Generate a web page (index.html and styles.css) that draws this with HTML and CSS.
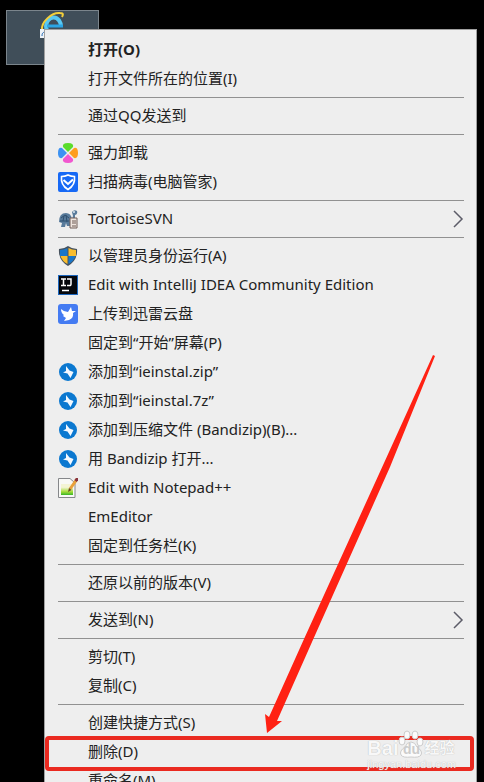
FILE: index.html
```html
<!DOCTYPE html>
<html lang="zh-CN">
  <head>
    <meta charset="UTF-8" />
    <meta name="viewport" content="width=device-width, initial-scale=1.0" />
    <title>ieinstal</title>
    <link rel="stylesheet" href="styles.css">
  </head>
  <body>
    <svg class="defs" aria-hidden="true">
      <symbol id="bandizip" viewBox="0 0 20 20">
        <circle cx="10" cy="10" r="9" fill="#0b78d0" />
        <path d="M8 4 L11.500 8.500 L15.500 10 L12.500 16 L9.500 11.500 L5 10.500 L8 9 Z" fill="#f4f9ff" />
      </symbol>
      <symbol id="chevron" viewBox="0 0 12 18">
        <path d="M2 1 L10 9 L2 17" fill="none" stroke="#5c5c68" stroke-width="1.500" />
      </symbol>
    </svg>
    <main class="desktop">
      <div class="shortcut">
        <svg class="shortcut-icon" viewBox="0 0 28 28" aria-hidden="true">
          <path d="M22 16 A7.500 9 0 0 0 7 15 Q7 22 14 23 Q19 23 21 20" fill="none" stroke="#58c8f3" stroke-width="4" />
          <path d="M8 15 H24" fill="none" stroke="#2ba5e4" stroke-width="3" />
          <path d="M3 19 C2 11 13 1 21 2 C25 2 24 4 23 6" fill="none" stroke="#f3cf3b" stroke-width="2" />
          <path d="M1 18 h9 v9 h-9 z" fill="#eef3f8" />
          <path d="M3 25 C3 21 5 21 8 21" fill="none" stroke="#2268b2" stroke-width="1" />
        </svg>
      </div>

      <div class="menu">
        <button class="item default"><span class="icon"></span>打开(O)</button>
        <button class="item"><span class="icon"></span>打开文件所在的位置(I)</button>
        <hr>
        <button class="item"><span class="icon"></span>通过QQ发送到</button>
        <hr>
        <button class="item">
          <svg class="icon" viewBox="0 0 20 20" aria-hidden="true">
            <path d="M10 9 L5 4 Q4 0 10 0 Q16 0 15 4 Z" fill="#5bdc2c" />
            <path d="M11 10 L16 5 Q20 4 20 10 Q20 16 16 15 Z" fill="#ff9d1e" />
            <path d="M10 11 L15 16 Q16 20 10 20 Q4 20 5 16 Z" fill="#f157cf" />
            <path d="M9 10 L4 15 Q0 16 0 10 Q0 4 4 5 Z" fill="#3c92f2" />
          </svg>
          强力卸载
        </button>
        <button class="item">
          <svg class="icon" viewBox="0 0 20 20" aria-hidden="true">
            <rect width="20" height="20" rx="2" fill="#1769f5" />
            <path d="M10 3 Q13 4.500 16.500 4.500 Q17.500 13 10 17.500 Q2.500 13 3.500 4.500 Q7 4.500 10 3 Z" fill="none" stroke="#fff" stroke-width="1.600" />
            <path d="M5.500 8 L10 12 L15 7.500" fill="none" stroke="#fff" stroke-width="2" />
          </svg>
          扫描病毒(电脑管家)
        </button>
        <hr>
        <button class="item">
          <svg class="icon" viewBox="0 0 20 20" aria-hidden="true">
            <path d="M1 13 Q1 4 8 4 Q13 4 14 10 L15 7 L14 3 Q16 0 19 2 Q20 5 17 6 L17 10 L12 17 H9 L8 14 L7 18 H3 L4 14 Z" fill="#587b9b" />
            <path d="M3 9 L7 6 L11 9 M6 7 L5 12 M8 6 L9 13 M2 12 H11" fill="none" stroke="#2f506f" />
            <circle cx="16" cy="3" r="1" fill="#dce8f3" />
            <path d="M12 9 h7 v10 h-7 z" fill="#eee5df" stroke="#705f59" />
            <path d="M14 12 h4 M14 14 h4 M14 17 h4" stroke="#6d5a54" />
          </svg>
          TortoiseSVN
          <svg class="chevron" aria-hidden="true"><use href="#chevron" /></svg>
        </button>
        <hr>
        <button class="item">
          <svg class="icon" viewBox="0 0 20 20" aria-hidden="true">
            <path d="M10 0 Q6 3 1 3 Q0 14 10 20 Q20 14 19 3 Q14 3 10 0 Z" fill="#46525e" />
            <path d="M9.500 2 Q6 4 2 4 V10 H9.500 Z M10.500 10 H17.500 Q16 15 10.500 18 Z" fill="#1976c9" />
            <path d="M10.500 2 Q14 4 18 4 V10 H10.500 Z M9.500 10 H2.500 Q4 15 9.500 18 Z" fill="#f9bd2e" />
          </svg>
          以管理员身份运行(A)
        </button>
        <button class="item">
          <svg class="icon" viewBox="0 0 20 20" aria-hidden="true">
            <rect width="20" height="20" fill="#1c66bd" />
            <rect x="1" y="1" width="18" height="18" fill="#05070c" />
            <path d="M3 4 H8 M5.500 4 V10 M3 10.500 H8 M9 4 H13 V9 Q13 11 11 10.500 H9 M4 15.500 H11" fill="none" stroke="#fff" stroke-width="1.500" />
          </svg>
          Edit with IntelliJ IDEA Community Edition
        </button>
        <button class="item">
          <svg class="icon" viewBox="0 0 20 20" aria-hidden="true">
            <rect width="20" height="20" rx="3" fill="#447bf2" />
            <path d="M3 5 Q6 8 10 8 L13 3 L14 7 L18 7 L15 9 Q16 14 11 16 L6 17 L8 14 L5 12 L6 11 Q3 9 3 5 Z" fill="#fff" />
          </svg>
          上传到迅雷云盘
        </button>
        <button class="item"><span class="icon"></span>固定到“开始”屏幕(P)</button>
        <button class="item"><svg class="icon" aria-hidden="true"><use href="#bandizip" /></svg>添加到“ieinstal.zip”</button>
        <button class="item"><svg class="icon" aria-hidden="true"><use href="#bandizip" /></svg>添加到“ieinstal.7z”</button>
        <button class="item"><svg class="icon" aria-hidden="true"><use href="#bandizip" /></svg>添加到压缩文件 (Bandizip)(B)...</button>
        <button class="item"><svg class="icon" aria-hidden="true"><use href="#bandizip" /></svg>用 Bandizip 打开...</button>
        <button class="item">
          <svg class="icon" viewBox="0 0 20 20" aria-hidden="true">
            <linearGradient id="note" x1="0" y1="0" x2="0" y2="1">
              <stop offset="0.300" stop-color="#f4f4d5" />
              <stop offset="0.700" stop-color="#a4dc38" />
              <stop offset="1" stop-color="#38b526" />
            </linearGradient>
            <path d="M0.500 0.500 H12 L17 5 V19.500 H0.500 Z" fill="#f8f8f6" stroke="#85878a" />
            <path d="M3 6 H15 V17 H3 Z" fill="url(#note)" />
            <path d="M12 11 L19 1" stroke="#e9a13b" stroke-width="3" />
            <path d="M17.500 3 L20 0" stroke="#88333d" stroke-width="3" />
            <path d="M10 14 L11 10 L13.500 12 Z" fill="#6a4824" />
          </svg>
          Edit with Notepad++
        </button>
        <button class="item"><span class="icon"></span>EmEditor</button>
        <button class="item"><span class="icon"></span>固定到任务栏(K)</button>
        <hr>
        <button class="item"><span class="icon"></span>还原以前的版本(V)</button>
        <hr>
        <button class="item">
          <span class="icon"></span>发送到(N)
          <svg class="chevron" aria-hidden="true"><use href="#chevron" /></svg>
        </button>
        <hr>
        <button class="item"><span class="icon"></span>剪切(T)</button>
        <button class="item"><span class="icon"></span>复制(C)</button>
        <hr>
        <button class="item"><span class="icon"></span>创建快捷方式(S)</button>
        <button class="item marked"><span class="icon"></span>删除(D)</button>
        <button class="item"><span class="icon"></span>重命名(M)</button>

        <!-- arrow pointing at the delete row -->
        <svg class="arrow" viewBox="0 0 172 380" aria-hidden="true">
          <path d="M170 1 L172 2 L127 113 L49 288 L14 367 L19 367 L4 379 L2 360 L6 363 L41 285 L121 109 Z" fill="#ff2113" />
        </svg>

        <div class="watermark">
          <div class="brand">
            <span>Bai</span>
            <span class="paw">
              <svg viewBox="0 0 26 28" aria-hidden="true">
                <ellipse cx="9" cy="5" rx="3" ry="4" />
                <ellipse cx="17" cy="5" rx="3" ry="4" />
                <ellipse cx="4" cy="11" rx="3" ry="4" />
                <ellipse cx="22" cy="12" rx="3" ry="4" />
                <path d="M13 12 Q17 12 19 17 Q25 21 23 25 Q21 28 13 27 Q5 28 3 25 Q1 21 7 17 Q9 12 13 12 Z" />
              </svg>
              <span class="du">du</span>
            </span>
            <span class="jingyan">经验</span>
          </div>
          <div class="site">jingyan.baidu.com</div>
        </div>
      </div>
    </main>
  </body>
</html>
```
FILE: styles.css
```css
body {
  margin: 0;
  background: #000;
  font-family: "Noto Sans", "Noto Sans CJK SC", sans-serif;
}
.defs {
  display: none;
}
.desktop {
  position: relative;
  height: 100vh;
  overflow: hidden;
}
.shortcut {
  position: absolute;
  left: 6px;
  top: 10px;
  box-sizing: border-box;
  width: 93px;
  height: 55px;
  border: 1px solid #7b858c;
  background: #404e59;
  display: flex;
  justify-content: center;
}
.shortcut-icon {
  width: 28px;
  height: 28px;
}
.menu {
  position: absolute;
  top: 29px;
  left: 44px;
  right: 7px;
  padding: 5px 12px 5px 13px;
  border: 1px solid #a0a0a0;
  background: #eee;
}
.menu hr {
  height: 1px;
  margin: 4px 0 3px;
  border: 0;
  background: #919191;
}
.item {
  display: flex;
  align-items: center;
  gap: 10px;
  width: 100%;
  height: 29px;
  padding: 0;
  border: 0;
  background: none;
  color: #222;
  font-family: inherit;
  font-size: 15px;
  line-height: 29px;
  text-align: left;
  white-space: nowrap;
}
.item:hover {
  background: #fff;
}
.default {
  font-weight: 700;
}
.icon {
  flex: none;
  width: 20px;
  height: 20px;
}
.chevron {
  width: 12px;
  height: 18px;
  margin-left: auto;
}
.marked {
  position: relative;
}
.marked::after {
  content: "";
  position: absolute;
  top: -1px;
  bottom: -5px;
  left: -13px;
  right: -10px;
  border: 4px solid #ea2a20;
  border-radius: 4px;
}
.arrow {
  position: absolute;
  left: 218px;
  top: 324px;
  width: 172px;
  height: 380px;
  pointer-events: none;
}
.watermark {
  position: absolute;
  right: 20px;
  bottom: 30px;
  color: #f8f8f8;
  font-family: "Liberation Sans", "Noto Sans CJK SC", sans-serif;
  text-shadow: 0 0 1px #aaa;
  pointer-events: none;
}
.brand {
  display: flex;
  align-items: flex-end;
  font-size: 20px;
  font-weight: 700;
  line-height: 20px;
}
.paw {
  position: relative;
  width: 26px;
  height: 28px;
}
.paw svg {
  display: block;
  width: 26px;
  height: 28px;
  fill: #fbfbfb;
  stroke: #ccc;
}
.du {
  position: absolute;
  inset: 11px 0 0;
  color: #ccc;
  font-size: 14px;
  line-height: 16px;
  text-align: center;
  text-shadow: none;
}
.jingyan {
  font-size: 15px;
}
.site {
  font-size: 11px;
  line-height: 12px;
}
```
